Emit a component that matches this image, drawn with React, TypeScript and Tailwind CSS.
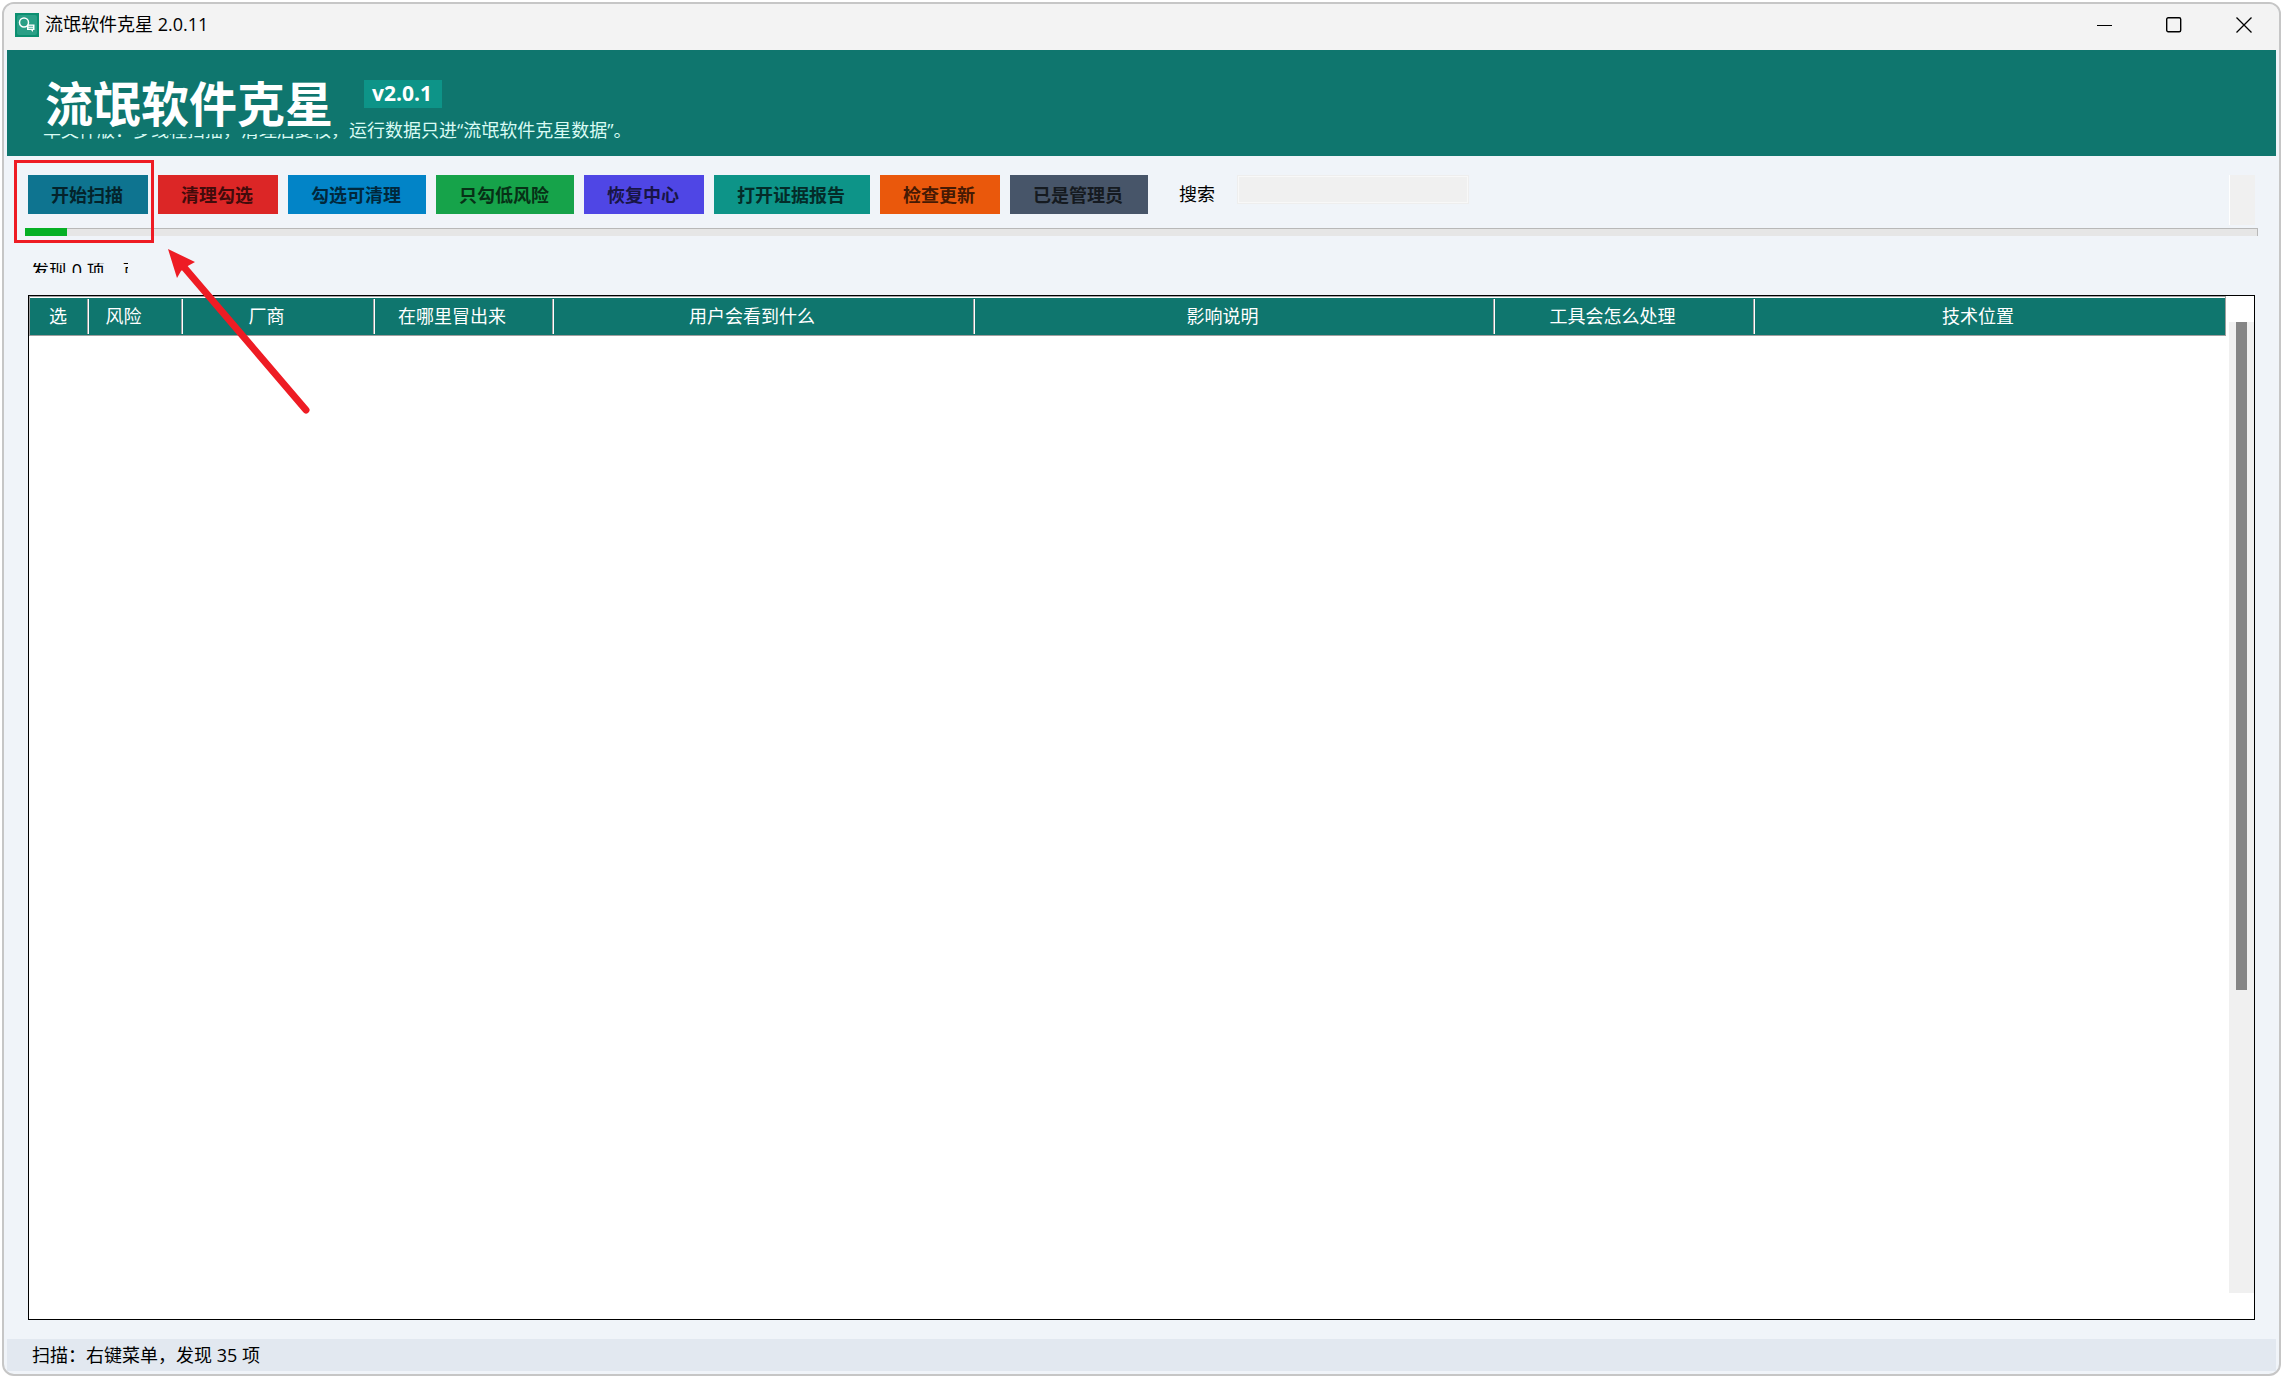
import * as React from "react";

type ToolbarAction = {
  label: string;
  className: string;
};

const actions: ToolbarAction[] = [
  { label: "开始扫描", className: "bg-[#0e7490] text-[#04232b]" },
  { label: "清理勾选", className: "bg-[#dc2626] text-[#420b0b]" },
  { label: "勾选可清理", className: "bg-[#0284c7] text-[#01283c]" },
  { label: "只勾低风险", className: "bg-[#16a34a] text-[#073116]" },
  { label: "恢复中心", className: "bg-[#4f46e5] text-[#181545]" },
  { label: "打开证据报告", className: "bg-[#0d9488] text-[#042c29]" },
  { label: "检查更新", className: "bg-[#ea580c] text-[#461a04]" },
  { label: "已是管理员", className: "bg-[#475569] text-[#151a20]" },
];

const columns = [
  { label: "选", width: "w-[59px]", padding: "pr-[2px]" },
  { label: "风险", width: "w-[94px]", padding: "pr-6" },
  { label: "厂商", width: "w-[192px]", padding: "pr-6" },
  { label: "在哪里冒出来", width: "w-[179px]", padding: "pr-6" },
  { label: "用户会看到什么", width: "w-[421px]", padding: "pr-6" },
  { label: "影响说明", width: "w-[520px]", padding: "pr-6" },
  { label: "工具会怎么处理", width: "w-[260px]", padding: "pr-6" },
  { label: "技术位置", width: "w-auto", padding: "pr-6" },
];

function AppIcon() {
  return (
    <svg viewBox="0 0 24 24" className="h-6 w-6" aria-hidden="true">
      <rect width="24" height="24" fill="#0b8f70" />
      <rect x="2" y="2" width="20" height="20" rx="2" fill="#2a9f86" />
      <circle cx="9" cy="9.500" r="4.500" fill="none" stroke="#fff" strokeWidth="1.500" />
      <path
        d="M12 11.500h7.500v5.500h-1.500v2l-2-2h-4z"
        fill="#fff"
      />
      <path d="M13.500 13.300h4.500M13.500 15.300h4.500" stroke="#2a9f86" strokeWidth=".8" />
    </svg>
  );
}

function TitleBar() {
  return (
    <div className="flex h-[46px] items-center bg-[#f3f3f3] pb-1 pl-[11px]">
      <AppIcon />
      <span className="ml-[6px] flex-1 pb-[2px] text-[18px] leading-6">
        流氓软件克星 2.0.11
      </span>
      <button type="button" aria-label="最小化" className="flex h-10 w-[70px] items-center justify-center">
        <svg viewBox="0 0 16 16" className="h-4 w-4" stroke="#000" aria-hidden="true">
          <path d="M1 8.500h15" strokeWidth="1.200" />
        </svg>
      </button>
      <button type="button" aria-label="最大化" className="flex h-10 w-[70px] items-center justify-center">
        <svg viewBox="0 0 16 16" className="h-4 w-4" fill="none" stroke="#000" aria-hidden="true">
          <rect x=".7" y=".7" width="14" height="14" rx="1.500" strokeWidth="1.400" />
        </svg>
      </button>
      <button type="button" aria-label="关闭" className="flex h-10 w-[70px] items-center justify-center">
        <svg viewBox="0 0 16 16" className="h-4 w-4" stroke="#000" aria-hidden="true">
          <path d="M.5.5l15 15M15.500.5l-15 15" strokeWidth="1.300" />
        </svg>
      </button>
    </div>
  );
}

function Banner() {
  return (
    <header className="mx-[3px] h-[106px] bg-[#0f766e] pl-9 pt-5 text-white">
      {/* the title's own background covers the top of the line below it */}
      <div className="relative flex h-16 items-start">
        <h1 className="h-16 bg-[#0f766e] pl-[2px] pr-4 pt-[2px] text-[48px] font-bold leading-[64px]">
          流氓软件克星
        </h1>
        <span className="ml-[15px] mt-[10px] bg-[#0d9488] pb-px pl-2 pr-[10px] text-[21px] font-bold leading-[27px]">
          v2.0.1
        </span>
      </div>
      <p className="-mt-4 text-[18px] leading-6 text-[#d9fbf4]">
        单文件版：多线程扫描，清理后复核，运行数据只进“流氓软件克星数据”。
      </p>
    </header>
  );
}

function Toolbar() {
  return (
    <div className="flex h-[72px] items-start pl-6 pr-6 pt-[19px]">
      <div className="flex gap-[10px]">
        {actions.map((action) => (
          <button
            key={action.label}
            type="button"
            className={`h-[39px] whitespace-nowrap pl-[23px] pr-[25px] text-[18px] font-bold leading-6 ${action.className}`}
          >
            {action.label}
          </button>
        ))}
      </div>
      <label htmlFor="search" className="ml-[31px] flex h-[39px] items-center text-[18px]">
        搜索
      </label>
      <input
        id="search"
        type="text"
        className="ml-[22px] h-[29px] w-[232px] border border-[#eee] bg-[#f0f0f0] px-2 text-[18px] shadow-[inset_0_0_0_1px_#f8f8f8]"
      />
      <div className="ml-auto h-[50px] w-[26px] border-l border-white bg-[#f0f0f0]" />
    </div>
  );
}

function ResultTable() {
  return (
    <div className="min-w-0 flex-1">
      <div className="border border-[#a0a0a0] pt-px">
        <table className="w-full table-fixed border-separate border-spacing-0 text-[18px] text-white">
          <thead>
            <tr>
              {columns.map((column) => (
                <th
                  key={column.label}
                  scope="col"
                  className={`group bg-[#0f766e] p-0 py-px text-center font-normal ${column.width}`}
                >
                  <div
                    className={`h-[35px] border-r border-white pb-px leading-[34px] shadow-[inset_-1px_0_#a0a0a0] group-last:border-r-0 group-last:shadow-none ${column.padding}`}
                  >
                    {column.label}
                  </div>
                </th>
              ))}
            </tr>
          </thead>
          <tbody />
        </table>
      </div>
    </div>
  );
}

function Callout() {
  return (
    <svg
      viewBox="0 0 320 280"
      className="pointer-events-none absolute left-0 top-[150px] h-[280px] w-[320px]"
      aria-hidden="true"
    >
      <rect x="15.500" y="11.500" width="137" height="80" fill="none" stroke="#ee1c24" strokeWidth="3" />
      <path d="M183 116L306 260" stroke="#ee1c24" strokeWidth="7" strokeLinecap="round" />
      <path d="M168 99L195 112L186 117L181 121L177 128Z" fill="#ee1c24" />
    </svg>
  );
}

export default function App() {
  return (
    <div className="relative flex h-screen min-h-[600px] bg-white pb-[2px] pl-[2px] pr-px pt-[2px] font-['Open_Sans','Noto_Sans_CJK_SC',sans-serif] text-black">
      <div className="flex min-w-0 flex-1 flex-col overflow-hidden rounded-xl border-2 border-[#c6c6c6] bg-[#f0f4f9]">
        <TitleBar />
        <Banner />
        <Toolbar />

        <div className="mx-[21px] h-2 border-r border-t border-[#b8b8b8] bg-[#e6e6e6]">
          <div className="-mt-px h-2 w-[42px] bg-[#06b025]" />
        </div>

        <div className="ml-[27px] mt-[27px] h-[10px] w-[97px] overflow-hidden whitespace-nowrap text-[18px]">
          <p className="-mt-[5px] leading-6">发现 0 项，可清理</p>
        </div>

        <main className="mx-6 mt-[22px] flex min-h-0 flex-1 border border-black bg-white">
          <ResultTable />
          <div className="mb-[26px] ml-[3px] mt-[26px] flex w-[25px] justify-center bg-[#f0f0f0]">
            <div className="h-[calc(69%-2px)] w-[11px] bg-[#858585]" />
          </div>
        </main>

        <footer className="mx-[3px] mb-[3px] mt-[19px] h-8 bg-[#e2e8f0] pl-[25px] text-[18px] leading-8">
          扫描：右键菜单，发现 35 项
        </footer>
      </div>
      <Callout />
    </div>
  );
}
